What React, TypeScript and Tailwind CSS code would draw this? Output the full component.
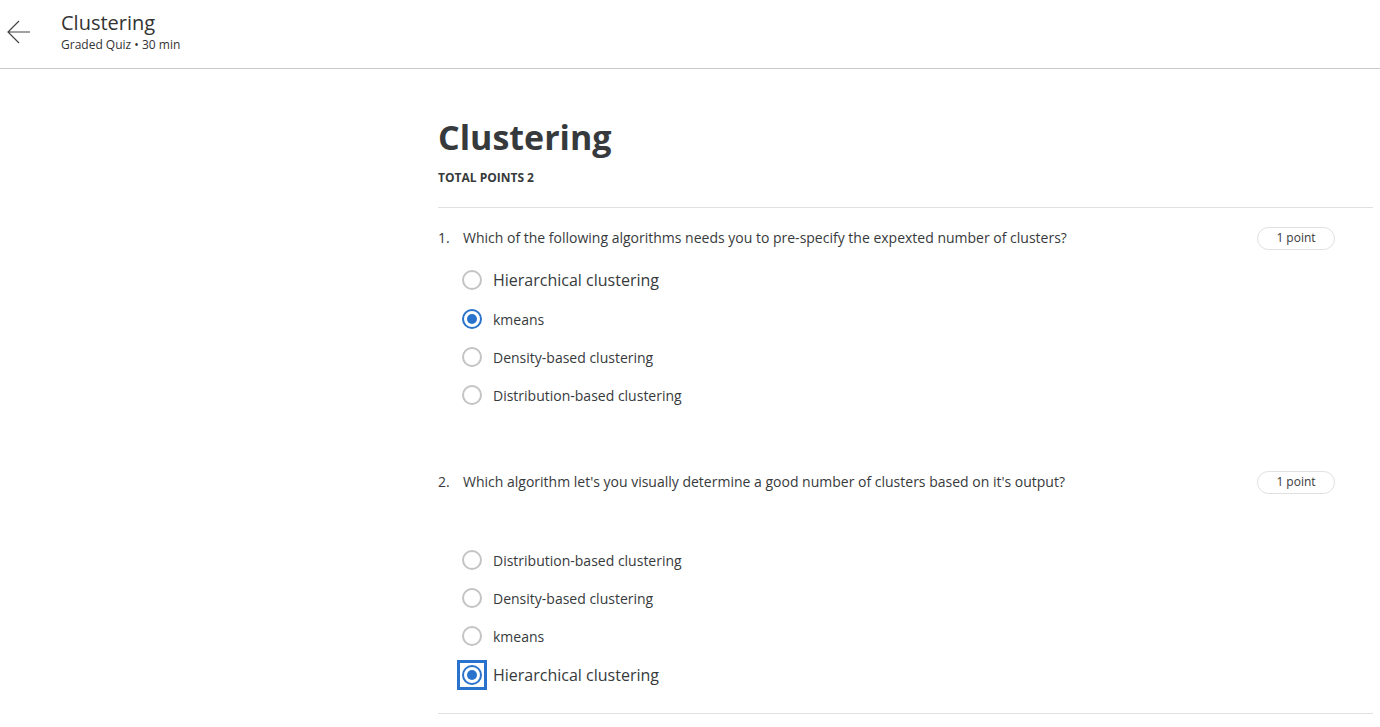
import React from "react";

type Option = { label: string; big?: boolean; checked?: boolean; focused?: boolean };

const questions: { n: number; text: string; gap: string; options: Option[] }[] = [
  {
    n: 1,
    text: "Which of the following algorithms needs you to pre-specify the expexted number of clusters?",
    gap: "mt-[11px]",
    options: [
      { label: "Hierarchical clustering", big: true },
      { label: "kmeans", checked: true },
      { label: "Density-based clustering" },
      { label: "Distribution-based clustering" },
    ],
  },
  {
    n: 2,
    text: "Which algorithm let's you visually determine a good number of clusters based on it's output?",
    gap: "mt-[48px]",
    options: [
      { label: "Distribution-based clustering" },
      { label: "Density-based clustering" },
      { label: "kmeans" },
      { label: "Hierarchical clustering", big: true, checked: true, focused: true },
    ],
  },
];

const Radio = ({ checked, focused }: { checked?: boolean; focused?: boolean }) => (
  <div
    className={`flex items-center justify-center w-[30px] h-[30px] ${
      focused ? "outline-[3px] outline-solid outline-[#2a73cc] -outline-offset-[3px]" : ""
    }`}
  >
    <div
      className={`flex items-center justify-center w-[20px] h-[20px] rounded-full border-2 ${
        checked ? "border-[#2a73cc]" : "border-[#c4c4c4]"
      }`}
    >
      {checked && <div className="w-[10px] h-[10px] rounded-full bg-[#2a73cc]" />}
    </div>
  </div>
);

const App = () => {
  return (
    <div className="min-h-screen bg-white text-[#373a3c]" style={{ fontFamily: '"Open Sans", sans-serif' }}>
      <header className="flex h-[69px] border-b border-[#c8c8c8]">
        <div className="pl-[7px] pt-[20px]">
          <svg width="24" height="24" viewBox="0 0 24 24" fill="none" stroke="#444" strokeWidth="1.2">
            <path d="M1 12h22M12 1L1 12l11 11" />
          </svg>
        </div>
        <div className="pl-[30px] pt-[10px]">
          <div className="text-[20px] leading-[26px] text-[#333]">Clustering</div>
          <div className="text-[12px] leading-[16px] mt-[1px] text-[#333]">Graded Quiz • 30 min</div>
        </div>
      </header>

      <main className="ml-[438px] w-[935px] pt-[48px]">
        <h1 className="text-[34px] leading-[41px] font-bold">Clustering</h1>
        <div className="mt-[12px] text-[12px] leading-[16px] font-bold">TOTAL POINTS 2</div>
        <div className="mt-[21px] border-t border-[#e0e0e0]" />

        {questions.map((q, qi) => (
          <section key={q.n} className={qi === 0 ? "pt-[19px]" : "pt-[57px]"}>
            <div className="flex items-center h-[22px]">
              <div className="w-[25px] text-[14px] leading-[20px]">{q.n}.</div>
              <div className="flex-1 text-[14px] leading-[20px]">{q.text}</div>
              <div className="mr-[38px] w-[78px] h-[23px] rounded-full border border-[#e0e0e0] flex items-center justify-center text-[12px]">
                1 point
              </div>
            </div>
            <div className={`${q.gap} pl-[19px]`}>
              {q.options.map((o) => (
                <div key={o.label} className={`flex items-center ${o.big ? "h-[40px]" : "h-[38px]"}`}>
                  <Radio checked={o.checked} focused={o.focused} />
                  <span className={`ml-[6px] ${o.big ? "text-[16px]" : "text-[14px]"}`}>{o.label}</span>
                </div>
              ))}
            </div>
          </section>
        ))}

        <div className="mt-[18px] border-t border-[#e0e0e0]" />
      </main>
    </div>
  );
};

export default App;
